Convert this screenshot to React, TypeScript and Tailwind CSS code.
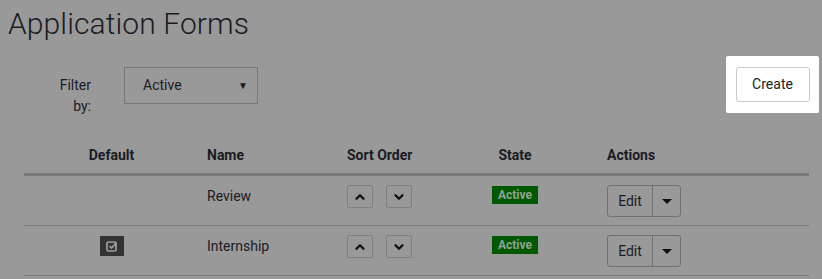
import { ChevronUp, ChevronDown } from "lucide-react";

const rows = [
  { name: "Review", isDefault: false },
  { name: "Internship", isDefault: true },
];

function SortBtn({ dir }: { dir: "up" | "down" }) {
  return (
    <button className="flex h-[23px] w-[26px] items-center justify-center rounded-[2px] border border-[#808080] bg-[#999999]">
      {dir === "up" ? (
        <ChevronUp size={14} strokeWidth={4} className="text-[#111]" />
      ) : (
        <ChevronDown size={14} strokeWidth={4} className="text-[#111]" />
      )}
    </button>
  );
}

function CheckIcon() {
  return (
    <div className="mt-[1px] flex h-[20px] w-[24px] items-center justify-center bg-[#333333]">
      <svg width="12" height="12" viewBox="0 0 12 12" fill="none">
        <rect x="1" y="2" width="9" height="9" rx="1.5" stroke="#a0a0a0" strokeWidth="1.7" />
        <path d="M3.5 6l2 2 5-5.5" stroke="#a0a0a0" strokeWidth="1.7" />
      </svg>
    </div>
  );
}

function Caret() {
  return <span className="h-0 w-0 border-x-[5px] border-t-[5px] border-x-transparent border-t-[#111]" />;
}

export default function App() {
  return (
    <div
      className="h-[279px] w-[822px] overflow-hidden bg-[#999999] text-[#1b1b24]"
      style={{ fontFamily: "Roboto, 'Liberation Sans', sans-serif" }}
    >
      <h1 className="pl-[8px] pt-[4px] text-[30px] font-light leading-[40px] tracking-[0.1px]">
        Application Forms
      </h1>

      <div className="mt-[23px] flex items-start pr-[3px]">
        <div className="mt-[8px] w-[91px] text-right text-[14px] leading-[21px]">
          <div>Filter</div>
          <div>by:</div>
        </div>
        <div className="ml-[33px] flex h-[37px] w-[134px] items-center justify-between border border-[#777] pl-[18px] pr-[9px] text-[14px]">
          <span>Active</span>
          <span className="text-[10px]">▼</span>
        </div>
        <div className="ml-auto -mt-[11px] flex h-[57px] w-[93px] items-center justify-center rounded-[2px] bg-white">
          <button className="h-[35px] w-[74px] rounded-[3px] border border-[#cccccc] bg-white text-[14px] text-[#222]">
            Create
          </button>
        </div>
      </div>

      <div className="ml-[24px] mt-[20px] w-[785px] text-[14px]">
        <div className="grid h-[39px] grid-cols-[175px_140px_120px_112px_1fr] items-center border-b-[3px] border-[#7a7a7a] font-bold">
          <div className="text-center">Default</div>
          <div className="pl-[8px]">Name</div>
          <div className="pl-[8px]">Sort Order</div>
          <div className="text-center">State</div>
          <div className="pl-[36px]">Actions</div>
        </div>
        {rows.map((r) => (
          <div
            key={r.name}
            className="grid h-[50px] grid-cols-[175px_140px_120px_112px_1fr] items-start border-b border-[#7a7a7a] pt-[9px]"
          >
            <div className="flex justify-center">{r.isDefault && <CheckIcon />}</div>
            <div className="pl-[8px] leading-[22px]">{r.name}</div>
            <div className="flex gap-[13px] pl-[8px]">
              <SortBtn dir="up" />
              <SortBtn dir="down" />
            </div>
            <div className="flex justify-center pt-[1px]">
              <span className="bg-[#005800] px-[6px] py-[2px] text-[12px] font-bold leading-[14px] text-[#8fa38f]">
                Active
              </span>
            </div>
            <div className="pl-[36px]">
              <div className="flex h-[32px] w-[74px] rounded-[3px] border border-[#707070]">
                <div className="flex w-[45px] items-center justify-center border-r border-[#707070]">Edit</div>
                <div className="flex flex-1 items-center justify-center">
                  <Caret />
                </div>
              </div>
            </div>
          </div>
        ))}
      </div>
    </div>
  );
}
